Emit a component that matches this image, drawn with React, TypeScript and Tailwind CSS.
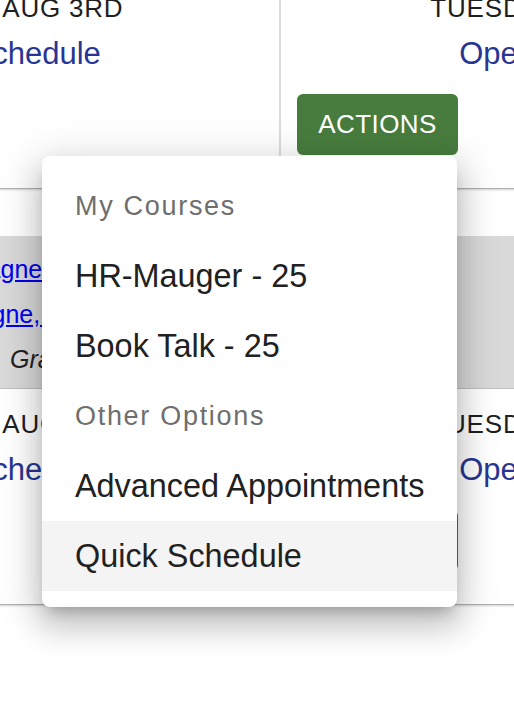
import React from 'react';

const courses = [
  { id: 'hr', left: 'Tuesday, Aug 3rd', right: 'Tuesday, Aug 10th' },
  { id: 'book', left: 'Tuesday, Aug 3rd', right: 'Tuesday, Aug 10th' },
];

const menu = [
  { type: 'header', label: 'My Courses' },
  { type: 'item', label: 'HR-Mauger - 25' },
  { type: 'item', label: 'Book Talk - 25' },
  { type: 'header', label: 'Other Options' },
  { type: 'item', label: 'Advanced Appointments' },
  { type: 'item', label: 'Quick Schedule', active: true },
];

function DayCell({ date, divider }: { date: string; divider?: boolean }) {
  return (
    <div
      className={`shrink-0 pt-[20px] pb-[33px] text-center ${divider ? 'w-[572px] border-r-2 border-[#dcdcdc]' : 'w-[570px]'}`}
    >
      <p className="text-[26px] leading-[30px] tracking-[0.8px] uppercase text-[#1f1f1f]">{date}</p>
      <a href="#" className="block mt-[13px] text-[31px] leading-[36px] text-[#283593]">
        Open Schedule
      </a>
      <div className="mt-[22px] flex pl-[16px]">
        <button className="w-[161px] h-[61px] rounded-[6px] bg-[#487c3e] text-white text-[26px] tracking-[0.4px] uppercase">
          Actions
        </button>
      </div>
    </div>
  );
}

function DayRow({ left, right }: { left: string; right: string }) {
  return (
    <div className="flex bg-white border-b border-[#b0b0b0] shadow-[0_1px_2px_rgba(0,0,0,0.18)]">
      <DayCell date={left} divider />
      <DayCell date={right} />
    </div>
  );
}

function CourseBand() {
  return (
    <div className="bg-[#d9d9d9] border-b border-[#c2c2c2] pt-[11px] pb-[6px] pl-[193px] text-[25px] leading-[45px] text-[#222] whitespace-nowrap">
      <a href="#" className="block ml-[4px] text-[#0000ee] underline">Champagne Campus</a>
      <a href="#" className="block -ml-[5px] text-[#0000ee] underline">Champagne, Lucie</a>
      <p className="ml-[108px] italic">Grade 7 · Room 214</p>
    </div>
  );
}

export default function App() {
  return (
    <div className="relative w-full h-[708px] overflow-hidden bg-white font-['Liberation_Sans',Arial,sans-serif]">
      <div className="-mt-[27px] -ml-[291px] w-[1142px]">
        <DayRow left={courses[0].left} right={courses[0].right} />
        <div className="h-[47px]" />
        <CourseBand />
        <DayRow left={courses[1].left} right={courses[1].right} />
      </div>

      <div className="absolute left-[42px] top-[156px] w-[415px] rounded-[8px] bg-white pt-[15px] pb-[16px] shadow-[0_10px_14px_-6px_rgba(0,0,0,0.22),0_18px_30px_4px_rgba(0,0,0,0.14),0_8px_40px_8px_rgba(0,0,0,0.12)]">
        {menu.map((m) =>
          m.type === 'header' ? (
            <div key={m.label} className="h-[70px] flex items-center px-[33px] text-[27px] tracking-[1.7px] text-[#6e6e6e] whitespace-nowrap">
              {m.label}
            </div>
          ) : (
            <div
              key={m.label}
              className={`h-[70px] flex items-center pl-[33px] text-[32.4px] text-[#212121] whitespace-nowrap ${m.active ? 'bg-[#f4f4f4]' : ''}`}
            >
              {m.label}
            </div>
          )
        )}
      </div>
    </div>
  );
}
